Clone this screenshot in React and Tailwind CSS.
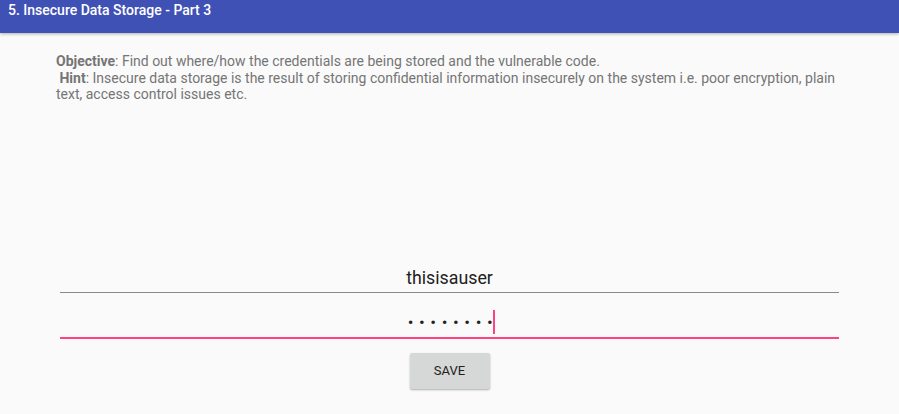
export default function App() {
  return (
    <div className="w-[899px] h-[414px] bg-[#fafafa] overflow-hidden flex flex-col" style={{ fontFamily: 'Roboto, "Liberation Sans", sans-serif' }}>
      {/* Toolbar */}
      <div className="h-[33px] bg-[#3f51b5] shadow-[0_1px_3px_rgba(0,0,0,0.3)] flex items-start px-[8px] pt-[2px] shrink-0">
        <span className="text-white text-[14px] font-medium leading-[17px]">5. Insecure Data Storage - Part 3</span>
      </div>

      {/* Description */}
      <div className="pl-[56px] pr-[60px] pt-[20px] text-[14px] leading-[16.5px] text-[#757575]">
        <p>
          <b className="font-bold">Objective</b>: Find out where/how the credentials are being stored and the vulnerable code.
        </p>
        <p>
          &nbsp;<b className="font-bold">Hint</b>: Insecure data storage is the result of storing confidential information insecurely on the system i.e. poor encryption, plain text, access control issues etc.
        </p>
      </div>

      {/* Form */}
      <div className="mt-auto px-[60px] pb-[25px] flex flex-col items-stretch">
        <div className="h-[38px] flex items-end justify-center border-b border-[#8a8a8a] pb-[3px]">
          <span className="text-[17.8px] text-[#212121] leading-[22px]">thisisauser</span>
        </div>
        <div className="h-[46px] flex items-end justify-center border-b-2 border-[#ff4081] pb-[3px]">
          <span className="flex items-center h-[24px] pl-[4px]">
            <span className="text-[17px] text-[#212121] tracking-[5.6px] leading-[22px]">••••••••</span>
            <span className="w-[2px] h-[24px] bg-[#ff4081] -ml-[5px]" />
          </span>
        </div>
        <div className="flex justify-center mt-[14px]">
          <button className="w-[80px] h-[36px] bg-[#d6d7d7] rounded-[2px] shadow-[0_1px_2px_rgba(0,0,0,0.3)] text-[13px] font-normal text-[#212121]">
            SAVE
          </button>
        </div>
      </div>
    </div>
  );
}
